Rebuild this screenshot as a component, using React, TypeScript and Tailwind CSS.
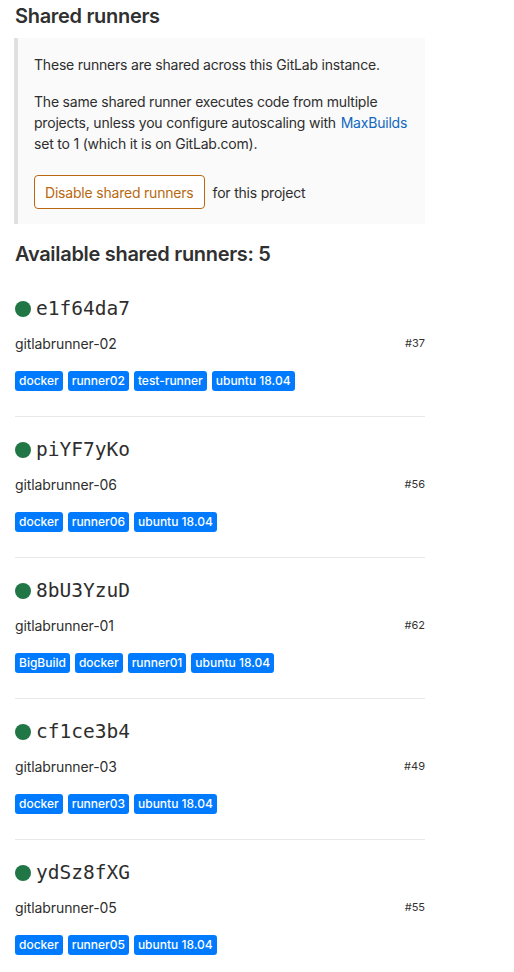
type Runner = {
  token: string;
  name: string;
  id: number;
  tags: string[];
};

const runners: Runner[] = [
  { token: "e1f64da7", name: "gitlabrunner-02", id: 37, tags: ["docker", "runner02", "test-runner", "ubuntu 18.04"] },
  { token: "piYF7yKo", name: "gitlabrunner-06", id: 56, tags: ["docker", "runner06", "ubuntu 18.04"] },
  { token: "8bU3YzuD", name: "gitlabrunner-01", id: 62, tags: ["BigBuild", "docker", "runner01", "ubuntu 18.04"] },
  { token: "cf1ce3b4", name: "gitlabrunner-03", id: 49, tags: ["docker", "runner03", "ubuntu 18.04"] },
  { token: "ydSz8fXG", name: "gitlabrunner-05", id: 55, tags: ["docker", "runner05", "ubuntu 18.04"] },
];

const App = () => {
  return (
    <div className="min-h-screen bg-white text-[#2e2e2e] font-['Inter','Liberation_Sans',sans-serif]">
      <div className="w-[410px] ml-[15px]">
        <h4 className="mt-[4px] mb-[10px] text-[20px] leading-[24px] font-semibold tracking-[-0.3px] text-[#303030]">
          Shared runners
        </h4>

        <div className="bg-[#fafafa] border-l-[4px] border-[#e0e0e0] -ml-[1px] pl-[16px] pr-[10px] pt-[16px] pb-[15px] text-[14px] tracking-[-0.2px] text-[#2e2e2e]">
          <p className="leading-[21px] mb-[16px]">These runners are shared across this GitLab instance.</p>
          <p className="leading-[21px] mb-[21px]">
            The same shared runner executes code from multiple projects, unless you configure autoscaling with{" "}
            <a className="inline-block ml-[1px] text-[#1068bf]">MaxBuilds</a> set to 1 (which it is on GitLab.com).
          </p>
          <div className="flex items-center gap-[8px]">
            <button className="h-[34px] px-[10px] border border-[#b8690f] rounded-[4px] text-[#b8690f] text-[14px] tracking-[-0.2px] bg-white">
              Disable shared runners
            </button>
            <span>for this project</span>
          </div>
        </div>

        <h4 className="mt-[18px] text-[20px] leading-[24px] font-semibold tracking-[-0.3px] text-[#303030]">
          Available shared runners: 5
        </h4>

        <div className="mt-[10px]">
          {runners.map((r) => (
            <div key={r.token} className="pt-[19px] pb-[25px] border-b border-[#e8e8e8]">
              <div className="flex items-center h-[28px]">
                <span className="w-[16px] h-[16px] rounded-full bg-[#217645] mr-[5px]" />
                <span className="font-['DejaVu_Sans_Mono',monospace] text-[19.5px] text-[#2e2e2e]">{r.token}</span>
              </div>
              <div className="mt-[10px] flex items-center justify-between h-[20px]">
                <span className="text-[14px] tracking-[-0.1px] text-[#2e2e2e]">{r.name}</span>
                <span className="text-[11px] text-[#333333]">#{r.id}</span>
              </div>
              <div className="mt-[18px] flex gap-[5px]">
                {r.tags.map((t) => (
                  <span
                    key={t}
                    className="h-[20px] px-[4px] rounded-[3px] bg-[#007bff] text-white text-[12px] leading-[20px] font-medium"
                  >
                    {t}
                  </span>
                ))}
              </div>
            </div>
          ))}
        </div>
      </div>
    </div>
  );
};

export default App;
